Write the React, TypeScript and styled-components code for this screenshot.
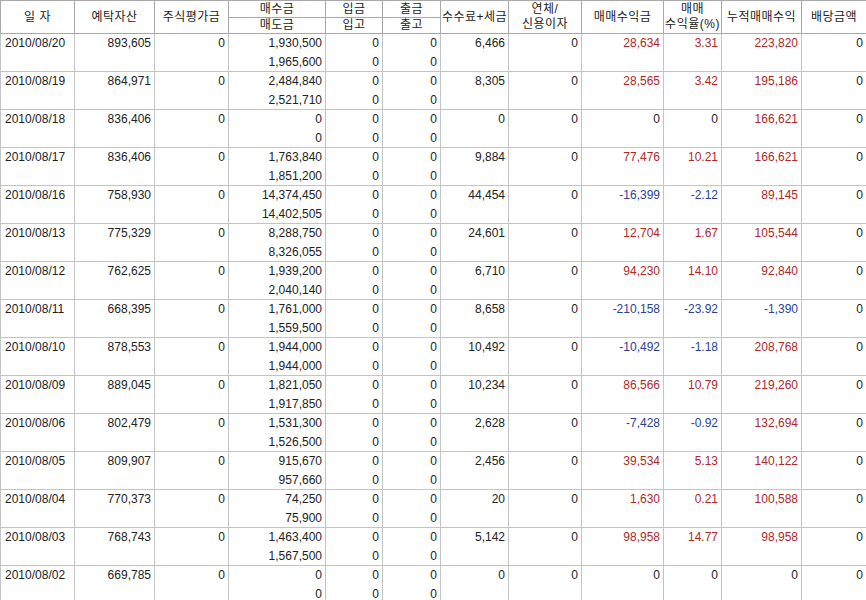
import React from "react";
import styled, { createGlobalStyle } from "styled-components";

const G = createGlobalStyle`
  body { margin: 0; background: #fff; font-family: "Liberation Sans", "Noto Sans CJK KR", sans-serif; }
`;

const Table = styled.table`
  border-collapse: collapse;
  table-layout: fixed;
  width: 866px;
  font-size: 12px;
  color: #222;
`;
const Th = styled.th<{ $h?: number }>`
  font-weight: normal;
  height: ${(p) => p.$h ?? 16}px;
  padding: 0;
  line-height: 15px;
  border: 1px solid #a8a8a8;
  text-align: center;
  background: #fff;
  white-space: nowrap;
  letter-spacing: 0.5px;
`;
const Td = styled.td<{ $c?: string; $top?: boolean; $bot?: boolean }>`
  height: ${(p) => (p.$bot ? 18 : 19)}px;
  padding: 0 3px 0 0;
  line-height: 18px;
  text-align: right;
  vertical-align: top;
  white-space: nowrap;
  color: ${(p) => p.$c || "#222"};
  border-left: 1px solid #c4c4c4;
  border-right: 1px solid #c4c4c4;
  border-top: ${(p) => (p.$bot ? "none" : "1px solid #c4c4c4")};
  border-bottom: ${(p) => (p.$top ? "none" : "1px solid #c4c4c4")};
`;
const DateTd = styled(Td)`
  text-align: left;
  padding-left: 4px;
`;

const widths = [74, 80, 74, 97, 57, 58, 68, 73, 82, 58, 80, 65];

type R = [string, string, string, string, string, string, string, string];
const rows: R[] = [
  ["2010/08/20", "893,605", "1,930,500", "1,965,600", "6,466", "28,634", "3.31", "223,820"],
  ["2010/08/19", "864,971", "2,484,840", "2,521,710", "8,305", "28,565", "3.42", "195,186"],
  ["2010/08/18", "836,406", "0", "0", "0", "0", "0", "166,621"],
  ["2010/08/17", "836,406", "1,763,840", "1,851,200", "9,884", "77,476", "10.21", "166,621"],
  ["2010/08/16", "758,930", "14,374,450", "14,402,505", "44,454", "-16,399", "-2.12", "89,145"],
  ["2010/08/13", "775,329", "8,288,750", "8,326,055", "24,601", "12,704", "1.67", "105,544"],
  ["2010/08/12", "762,625", "1,939,200", "2,040,140", "6,710", "94,230", "14.10", "92,840"],
  ["2010/08/11", "668,395", "1,761,000", "1,559,500", "8,658", "-210,158", "-23.92", "-1,390"],
  ["2010/08/10", "878,553", "1,944,000", "1,944,000", "10,492", "-10,492", "-1.18", "208,768"],
  ["2010/08/09", "889,045", "1,821,050", "1,917,850", "10,234", "86,566", "10.79", "219,260"],
  ["2010/08/06", "802,479", "1,531,300", "1,526,500", "2,628", "-7,428", "-0.92", "132,694"],
  ["2010/08/05", "809,907", "915,670", "957,660", "2,456", "39,534", "5.13", "140,122"],
  ["2010/08/04", "770,373", "74,250", "75,900", "20", "1,630", "0.21", "100,588"],
  ["2010/08/03", "768,743", "1,463,400", "1,567,500", "5,142", "98,958", "14.77", "98,958"],
  ["2010/08/02", "669,785", "0", "0", "0", "0", "0", "0"],
];

const col = (v: string) => (v.startsWith("-") ? "#2a3f9a" : v === "0" ? "#222" : "#b02828");

export default function App() {
  return (
    <>
      <G />
      <Table>
        <colgroup>
          {widths.map((w, i) => (
            <col key={i} style={{ width: w }} />
          ))}
        </colgroup>
        <thead>
          <tr>
            <Th rowSpan={2}>일 자</Th>
            <Th rowSpan={2}>예탁자산</Th>
            <Th rowSpan={2}>주식평가금</Th>
            <Th>매수금</Th>
            <Th>입금</Th>
            <Th>출금</Th>
            <Th rowSpan={2}>수수료+세금</Th>
            <Th rowSpan={2}>연체/<br />신용이자</Th>
            <Th rowSpan={2}>매매수익금</Th>
            <Th rowSpan={2}>매매<br />수익율(%)</Th>
            <Th rowSpan={2}>누적매매수익</Th>
            <Th rowSpan={2}>배당금액</Th>
          </tr>
          <tr>
            <Th $h={15}>매도금</Th>
            <Th $h={15}>입고</Th>
            <Th $h={15}>출고</Th>
          </tr>
        </thead>
        <tbody>
          {rows.map((r) => (
            <React.Fragment key={r[0]}>
              <tr>
                <DateTd rowSpan={2}>{r[0]}</DateTd>
                <Td rowSpan={2}>{r[1]}</Td>
                <Td rowSpan={2}>0</Td>
                <Td $top>{r[2]}</Td>
                <Td $top>0</Td>
                <Td $top>0</Td>
                <Td rowSpan={2}>{r[4]}</Td>
                <Td rowSpan={2}>0</Td>
                <Td rowSpan={2} $c={col(r[5])}>{r[5]}</Td>
                <Td rowSpan={2} $c={col(r[6])}>{r[6]}</Td>
                <Td rowSpan={2} $c={col(r[7])}>{r[7]}</Td>
                <Td rowSpan={2}>0</Td>
              </tr>
              <tr>
                <Td $bot>{r[3]}</Td>
                <Td $bot>0</Td>
                <Td $bot>0</Td>
              </tr>
            </React.Fragment>
          ))}
        </tbody>
      </Table>
    </>
  );
}
